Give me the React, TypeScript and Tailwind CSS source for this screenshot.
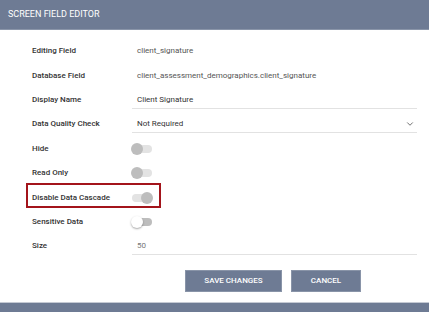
import { ChevronDown } from 'lucide-react';

type Row = {
  label: string;
  kind: 'text' | 'input' | 'select' | 'toggle';
  value?: string;
  on?: boolean;
  enabled?: boolean;
  highlight?: boolean;
};

const rows: Row[] = [
  { label: 'Editing Field', kind: 'text', value: 'client_signature' },
  { label: 'Database Field', kind: 'text', value: 'client_assessment_demographics.client_signature' },
  { label: 'Display Name', kind: 'input', value: 'Client Signature' },
  { label: 'Data Quality Check', kind: 'select', value: 'Not Required' },
  { label: 'Hide', kind: 'toggle' },
  { label: 'Read Only', kind: 'toggle' },
  { label: 'Disable Data Cascade', kind: 'toggle', on: true, highlight: true },
  { label: 'Sensitive Data', kind: 'toggle', enabled: true },
  { label: 'Size', kind: 'input', value: '50' },
];

function Toggle({ on, enabled }: { on?: boolean; enabled?: boolean }) {
  return (
    <div className="relative w-[22px] h-[12px] flex items-center">
      <div className={`w-[20px] h-[8px] ml-[1px] rounded-full ${enabled ? 'bg-[#bdbdbd]' : 'bg-[#e3e3e3]'}`} />
      <div
        className={`absolute top-0 w-[12px] h-[12px] rounded-full ${on ? 'left-[10px]' : 'left-0'} ${
          enabled ? 'bg-white shadow-[0_1px_2px_rgba(0,0,0,0.35)]' : 'bg-[#bdbdbd]'
        }`}
      />
    </div>
  );
}

function Value({ row }: { row: Row }) {
  if (row.kind === 'toggle') {
    return (
      <div className="-ml-[1px]">
        <Toggle on={row.on} enabled={row.enabled} />
      </div>
    );
  }
  if (row.kind === 'text') {
    return <div className="pl-[5px] text-[8px] text-[#555]">{row.value}</div>;
  }
  return (
    <div className="flex-1 h-[17px] flex items-center justify-between border-b border-[#e2e2e2] pl-[5px] pr-[2px] mt-[1px]">
      <span className={`text-[8px] ${row.label === 'Size' ? 'text-[#777]' : 'text-[#333]'}`}>{row.value}</span>
      {row.kind === 'select' && <ChevronDown className="w-[10px] h-[10px] text-[#555]" strokeWidth={2} />}
    </div>
  );
}

export default function App() {
  return (
    <div className="w-[429px] h-[312px] bg-white flex flex-col overflow-hidden" style={{ fontFamily: 'Roboto, "Liberation Sans", sans-serif' }}>
      <div className="h-[30px] shrink-0 bg-[#6e7b94] border-b border-[#8a95a9] flex items-center px-[8px]">
        <span className="text-white text-[9px]">SCREEN FIELD EDITOR</span>
      </div>

      <div className="flex flex-col pt-[9px] pl-[32px] pr-[12px]">
        {rows.map((row) => (
          <div key={row.label} className="relative h-[24.4px] flex items-center">
            {row.highlight && (
              <div className="absolute left-[-6px] top-[-2px] w-[135px] h-[25px] border-2 border-[#a3141b]" />
            )}
            <div className="w-[100px] shrink-0 text-[8px] font-medium text-[#333]">{row.label}</div>
            <Value row={row} />
          </div>
        ))}
      </div>

      <div className="flex gap-[9px] pl-[185px] mt-[11px]">
        <button className="w-[97px] h-[22px] bg-[#6e7b94] border border-[#8994a8] text-white text-[8px] font-medium">
          SAVE CHANGES
        </button>
        <button className="w-[70px] h-[22px] bg-[#6e7b94] border border-[#8994a8] text-white text-[8px] font-medium">
          CANCEL
        </button>
      </div>

      <div className="mt-auto h-[10px] bg-[#6e7b94] border-t border-[#c5cad4]" />
    </div>
  );
}
